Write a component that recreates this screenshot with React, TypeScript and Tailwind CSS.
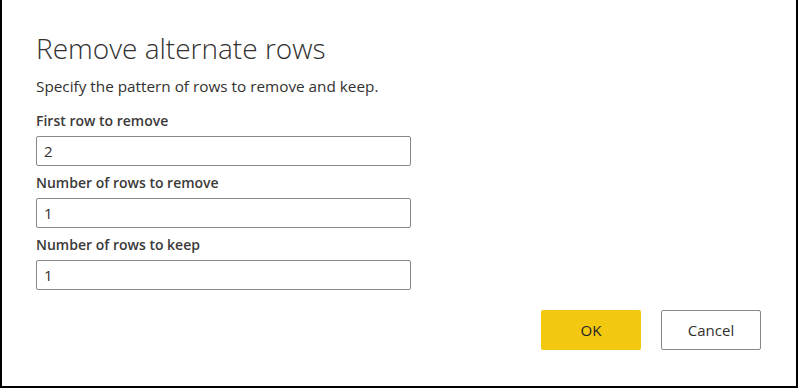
export default function App() {
  const fields = [
    { label: "First row to remove", value: "2" },
    { label: "Number of rows to remove", value: "1" },
    { label: "Number of rows to keep", value: "1" },
  ];

  return (
    <div
      className="w-[798px] h-[388px] bg-white border-l-2 border-r-2 border-b-2 border-black text-[#252423] flex flex-col"
      style={{ fontFamily: "'Segoe UI', 'Open Sans', sans-serif" }}
    >
      <div className="pl-[34px] pt-[28px] pr-[35px] flex flex-col flex-1">
        <h1 className="text-[28px] font-light leading-[40px] text-[#323130]">Remove alternate rows</h1>
        <p className="text-[15.3px] leading-[20px] mt-[8px] text-[#323130]">
          Specify the pattern of rows to remove and keep.
        </p>

        <div className="flex flex-col mt-[8px]">
          {fields.map((f) => (
            <div key={f.label} className="flex flex-col pt-[6px]">
              <label className="text-[14px] font-semibold leading-[22px] text-[#3b3a39]">{f.label}</label>
              <div className="mt-[4px] w-[375px] h-[30px] border border-[#8a8886] rounded-[2px] flex items-center px-[7px] text-[15px] text-[#323130]">
                {f.value}
              </div>
            </div>
          ))}
        </div>

        <div className="flex justify-end gap-[20px] mt-[20px]">
          <button className="w-[100px] h-[40px] rounded-[2px] bg-[#f2c811] text-[15px] text-[#252423]">OK</button>
          <button className="w-[100px] h-[40px] rounded-[2px] border border-[#8a8886] bg-white text-[15px] text-[#323130]">
            Cancel
          </button>
        </div>
      </div>
    </div>
  );
}
